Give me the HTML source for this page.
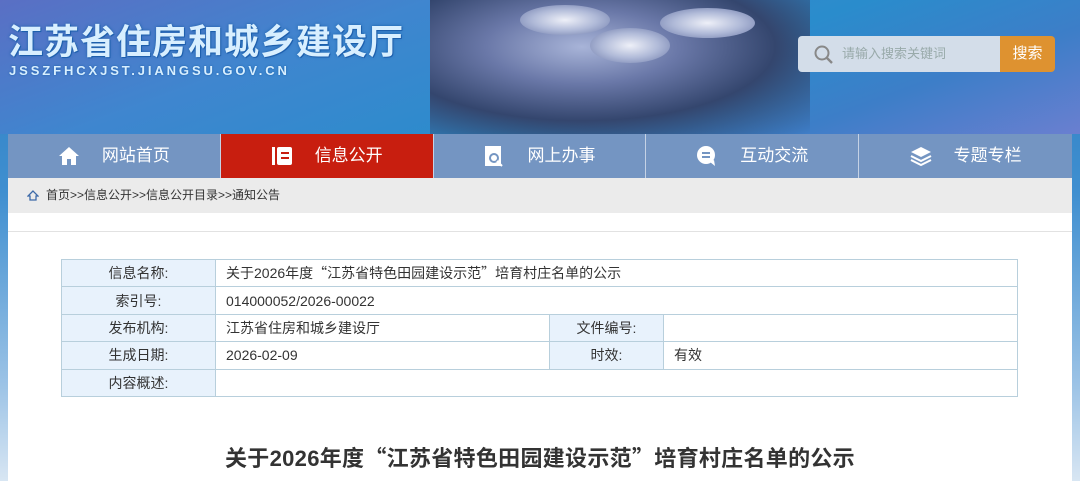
<!DOCTYPE html>
<html><head><meta charset="utf-8"><style>
*{margin:0;padding:0;box-sizing:border-box}
body{width:1080px;height:481px;overflow:hidden;font-family:"Liberation Sans","Noto Sans CJK SC",sans-serif;position:relative;background:linear-gradient(180deg,#2e7cc0 0%,#3f8fd0 40%,#9cc3e6 80%,#d8e6f3 100%)}
.hdr{position:absolute;left:0;top:0;width:1080px;height:134px;background:linear-gradient(160deg,#5a6fc4 0%,#3f86cf 30%,#2a8ccc 60%,#3d7ec8 80%,#6a7fd0 100%)}
.img{position:absolute;left:430px;top:0;width:380px;height:134px;background:radial-gradient(ellipse at 40% 35%,#a8b4d8 0%,#6a78a8 30%,#34466e 60%,rgba(40,80,130,0) 100%)}
.dome{position:absolute;border-radius:50%;background:radial-gradient(ellipse,#eef0f8 0%,#b0bad8 50%,#6a78a8 100%)}
.t1{position:absolute;left:8px;top:14px;font-size:35px;font-weight:bold;color:#d8efff;letter-spacing:1px;text-shadow:0 0 3px #1a5fa8,1px 1px 0 #2060b0}
.t2{position:absolute;left:9px;top:63px;font-size:13px;font-weight:bold;color:#d8efff;letter-spacing:2.9px;text-shadow:0 0 2px #1a5fa8}
.search{position:absolute;left:798px;top:36px;width:202px;height:36px;background:#d3dde9;border-radius:4px 0 0 4px;color:#9aa;font-size:13px;line-height:36px;padding-left:44px}
.btn{position:absolute;left:1000px;top:36px;width:55px;height:36px;background:#de9230;border-radius:0 4px 4px 0;color:#fff;font-size:15px;line-height:36px;text-align:center}
.nav{position:absolute;left:8px;top:134px;width:1064px;height:44px;display:flex;background:#7495c2}
.nav div{width:212.8px;height:44px;color:#fff;font-size:17px;line-height:44px;border-right:1px solid #c5d2e5;display:flex;align-items:center;justify-content:center;gap:22px}
.nav div:last-child{border-right:none}
.nav .on{background:#c81e0f}
.bc{position:absolute;left:8px;top:178px;width:1064px;height:35px;background:#ebebeb;font-size:12px;color:#333;line-height:35px;padding-left:38px}
.main{position:absolute;left:8px;top:213px;width:1064px;height:268px;background:#fff}
.line{position:absolute;left:8px;top:231px;width:1064px;height:1px;background:#e2e2e2}
table{position:absolute;left:61px;top:259px;width:957px;border-collapse:collapse;font-size:14px;color:#333}
td{border:1px solid #b8cfdc;height:27.4px;padding-left:10px}
td.l{background:#e8f2fc;text-align:center;padding-left:0;width:154px}
td.l2{background:#e8f2fc;text-align:center;padding-left:0;width:114px}
.q{font-family:"Noto Sans CJK SC",sans-serif}
h1{position:absolute;left:0;width:1080px;top:441px;text-align:center;font-size:22px;letter-spacing:0.3px;font-weight:bold;color:#333}
</style></head><body>
<div class="hdr"></div>
<div class="img"></div>
<div class="dome" style="left:520px;top:5px;width:90px;height:30px"></div>
<div class="dome" style="left:590px;top:28px;width:80px;height:35px"></div>
<div class="dome" style="left:660px;top:8px;width:95px;height:30px"></div>
<div class="t1">江苏省住房和城乡建设厅</div>
<div class="t2">JSSZFHCXJST.JIANGSU.GOV.CN</div>
<div class="search"><svg style="position:absolute;left:16px;top:9px" width="20" height="20" viewBox="0 0 20 20"><circle cx="8" cy="8" r="6.5" fill="none" stroke="#888" stroke-width="2"/><path d="M13 13l5 5" stroke="#888" stroke-width="2.4"/></svg>请输入搜索关键词</div>
<div class="btn">搜索</div>
<div class="nav">
<div><svg width="22" height="22" viewBox="0 0 22 22"><path d="M11 2L1 11h3v9h5v-6h4v6h5v-9h3z" fill="#fff"/></svg>网站首页</div>
<div class="on"><svg width="22" height="22" viewBox="0 0 22 22"><rect x="1" y="2" width="3" height="18" fill="#fff"/><rect x="6" y="2" width="15" height="18" rx="2" fill="#fff"/><rect x="10" y="7" width="8" height="2" fill="#c81e0f"/><rect x="10" y="12" width="8" height="2" fill="#c81e0f"/></svg>信息公开</div>
<div><svg width="22" height="22" viewBox="0 0 22 22"><rect x="2" y="1" width="16" height="20" fill="#fff"/><circle cx="11" cy="13" r="5" fill="#7495c2"/><circle cx="11" cy="13" r="3" fill="#fff"/><path d="M14 16l5 5" stroke="#fff" stroke-width="2"/></svg>网上办事</div>
<div><svg width="22" height="22" viewBox="0 0 22 22"><circle cx="10" cy="10" r="9" fill="#fff"/><path d="M14 17l5 4-1-6z" fill="#fff"/><rect x="6" y="7" width="8" height="2" fill="#7495c2"/><rect x="6" y="11" width="8" height="2" fill="#7495c2"/></svg>互动交流</div>
<div><svg width="22" height="22" viewBox="0 0 22 22"><path d="M11 2l10 5-10 5-10-5z" fill="#fff"/><path d="M1 11l10 5 10-5M1 15l10 5 10-5" stroke="#fff" stroke-width="2" fill="none"/></svg>专题专栏</div>
</div>
<div class="bc"><svg style="position:absolute;left:19px;top:12px" width="12" height="11" viewBox="0 0 12 11"><path d="M6 1L1 6h2v4h6V6h2z" fill="none" stroke="#3d6aa8" stroke-width="1.3"/></svg>首页&gt;&gt;信息公开&gt;&gt;信息公开目录&gt;&gt;通知公告</div>
<div class="main"></div>
<div class="line"></div>
<table>
<tr><td class="l">信息名称:</td><td colspan="3">关于2026年度<span class="q">“</span>江苏省特色田园建设示范<span class="q">”</span>培育村庄名单的公示</td></tr>
<tr><td class="l">索引号:</td><td colspan="3">014000052/2026-00022</td></tr>
<tr><td class="l">发布机构:</td><td style="width:334px">江苏省住房和城乡建设厅</td><td class="l2">文件编号:</td><td></td></tr>
<tr><td class="l">生成日期:</td><td>2026-02-09</td><td class="l2">时效:</td><td>有效</td></tr>
<tr><td class="l">内容概述:</td><td colspan="3"></td></tr>
</table>
<h1>关于2026年度<span class="q">“</span>江苏省特色田园建设示范<span class="q">”</span>培育村庄名单的公示</h1>
</body></html>
